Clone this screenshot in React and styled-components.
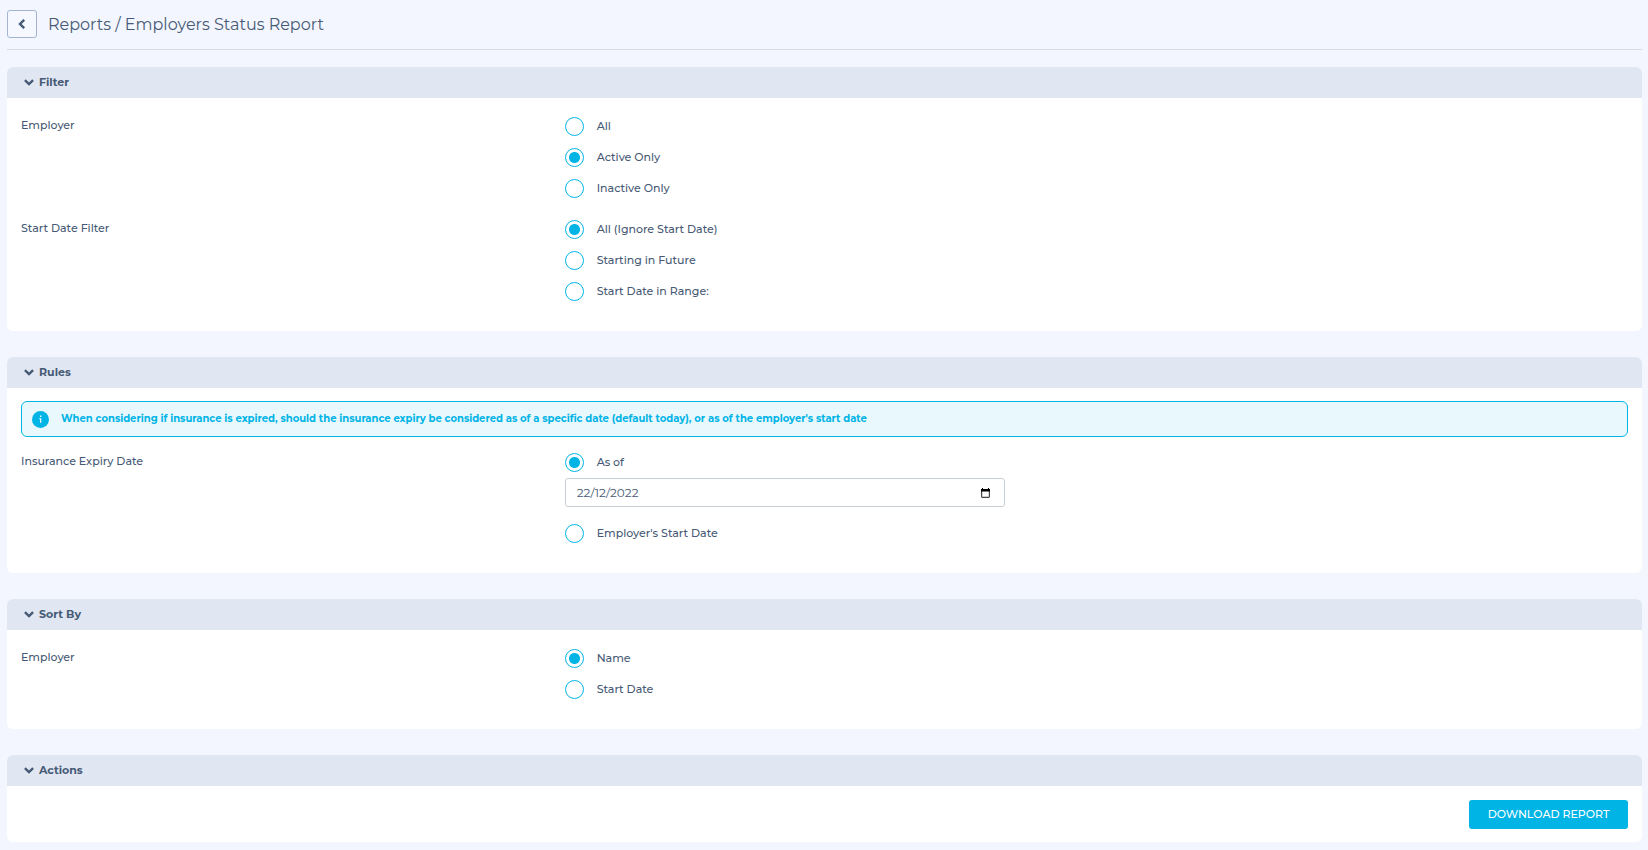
import React, { useState } from "react";
import styled, { createGlobalStyle } from "styled-components";

const ink = "#475a75";
const accent = "#00b4e6";

const GlobalStyle = createGlobalStyle`
  *, *::before, *::after { box-sizing: border-box; }
  body {
    margin: 0;
    background: #f3f6fe;
    color: ${ink};
    font-family: Montserrat, Inter, "Liberation Sans", sans-serif;
    font-size: 11px;
    font-weight: 500;
  }
  button, input { font: inherit; color: inherit; }
`;

const Page = styled.main`
  padding: 10px 6px 8px 7px;
`;

const TitleBar = styled.header`
  display: flex;
  align-items: flex-start;
  gap: 11px;
  padding-bottom: 9px;
  margin-bottom: 17px;
  border-bottom: 1px solid #d8dce3;
`;

const BackButton = styled.button`
  display: flex;
  align-items: center;
  justify-content: center;
  width: 30px;
  height: 28px;
  padding: 0;
  border: 1px solid #a5b5d0;
  border-radius: 3px;
  background: #f5f9ff;
  cursor: pointer;
`;

const Title = styled.h1`
  margin: 0;
  font-size: 16px;
  font-weight: 400;
  line-height: 30px;
`;

const PanelBox = styled.section`
  border-radius: 6px;
  background: #fff;
  overflow: hidden;

  & + & { margin-top: 26px; }
`;

const PanelHeading = styled.h2`
  margin: 0;
  background: #e0e7f3;
  font-size: 11px;
`;

const PanelToggle = styled.button`
  display: flex;
  align-items: center;
  gap: 5px;
  width: 100%;
  height: 31px;
  padding: 0 17px 1px;
  border: 0;
  background: none;
  font-weight: 700;
  text-align: left;
  cursor: pointer;
`;

const PanelBody = styled.div`
  display: flex;
  flex-direction: column;
  gap: 10px;
  padding: 13px 14px 24px;
`;

const ActionsBody = styled.div`
  display: flex;
  justify-content: flex-end;
  padding: 14px 14px 13px;
`;

const FieldRow = styled.div`
  display: grid;
  grid-template-columns: 1fr 2fr;
  column-gap: 12px;
`;

const FieldLabel = styled.div`
  line-height: 28px;
`;

const RadioLine = styled.label`
  display: flex;
  align-items: center;
  gap: 13px;
  width: fit-content;
  height: 31px;
  cursor: pointer;
`;

const LineText = styled.span`
  padding-bottom: 2px;
`;

const RadioInput = styled.input`
  appearance: none;
  flex: none;
  width: 19px;
  height: 19px;
  margin: 0;
  border: 1px solid ${accent};
  border-radius: 50%;
  background: #fff;
  cursor: pointer;

  &:checked {
    background: radial-gradient(circle, ${accent} 5px, #fff 6px);
  }
`;

const Notice = styled.div`
  display: flex;
  align-items: center;
  gap: 12px;
  min-height: 36px;
  padding: 0 10px;
  border: 1px solid ${accent};
  border-radius: 6px;
  background: #e9f8fd;
  color: ${accent};
  font-size: 10px;
  font-weight: 700;
`;

const DateBox = styled.div`
  display: flex;
  align-items: center;
  width: 100%;
  max-width: 440px;
  height: 29px;
  margin-bottom: 11px;
  padding: 0 14px 0 11px;
  border: 1px solid #c8ced6;
  border-radius: 3px;
  background: #fff;
`;

const DateInput = styled.input`
  flex: 1;
  min-width: 0;
  padding: 0;
  border: 0;
  background: none;
  font-size: 12px;
  font-weight: 400;
`;

const CalendarButton = styled.button`
  display: flex;
  padding: 0;
  border: 0;
  background: none;
  cursor: pointer;
`;

const PrimaryButton = styled.button`
  width: 159px;
  height: 29px;
  padding: 0 0 1px;
  border: 0;
  border-radius: 3px;
  background: ${accent};
  color: #fff;
  text-transform: uppercase;
  cursor: pointer;
`;

const ChevronDown = () => (
  <svg width="10" height="7" viewBox="0 0 10 7" fill="none" stroke="currentColor" strokeWidth="2.4" aria-hidden="true">
    <path d="M.9 1.1 5 5 9.1 1.1" />
  </svg>
);

const ChevronLeft = () => (
  <svg width="8" height="10" viewBox="0 0 8 10" fill="none" stroke="currentColor" strokeWidth="2.4" aria-hidden="true">
    <path d="M6.2.8 2 5l4.2 4.2" />
  </svg>
);

const InfoIcon = () => (
  <svg width="17" height="17" viewBox="0 0 17 17" aria-hidden="true">
    <circle cx="8.5" cy="8.5" r="8.5" fill="currentColor" />
    <path d="M8 4.5h1.400V6H8zM7.2 7.3h2.1v4.5H8V8.2h-.8z" fill="#e9f8fd" />
  </svg>
);

const CalendarIcon = () => (
  <svg width="9" height="10" viewBox="0 0 9 10" aria-hidden="true">
    <rect x=".6" y="1.6" width="7.8" height="7.8" rx=".8" fill="none" stroke="#444" strokeWidth="1.2" />
    <path fill="#000" d="M1 0h1v1h5V0h1v1h1v2.500H0V1h1z" />
  </svg>
);

function Panel({ title, Body = PanelBody, children }) {
  const [open, setOpen] = useState(true);
  return (
    <PanelBox>
      <PanelHeading>
        <PanelToggle type="button" aria-expanded={open} onClick={() => setOpen(!open)}>
          <ChevronDown />
          {title}
        </PanelToggle>
      </PanelHeading>
      {open && <Body>{children}</Body>}
    </PanelBox>
  );
}

function Field({ id, label, children }) {
  return (
    <FieldRow role="radiogroup" aria-labelledby={id}>
      <FieldLabel id={id}>{label}</FieldLabel>
      <div>{children}</div>
    </FieldRow>
  );
}

function Radio({ name, label, checked }) {
  return (
    <RadioLine>
      <RadioInput type="radio" name={name} value={label} defaultChecked={checked} />
      <LineText>{label}</LineText>
    </RadioLine>
  );
}

export default function App() {
  return (
    <>
      <GlobalStyle />
      <Page>
        <TitleBar>
          <BackButton type="button" aria-label="Back">
            <ChevronLeft />
          </BackButton>
          <Title>Reports / Employers Status Report</Title>
        </TitleBar>

        <Panel title="Filter">
          <Field id="filter-employer" label="Employer">
            <Radio name="employer" label="All" />
            <Radio name="employer" label="Active Only" checked />
            <Radio name="employer" label="Inactive Only" />
          </Field>
          <Field id="filter-start" label="Start Date Filter">
            <Radio name="start" label="All (Ignore Start Date)" checked />
            <Radio name="start" label="Starting in Future" />
            <Radio name="start" label="Start Date in Range:" />
          </Field>
        </Panel>

        <Panel title="Rules">
          <Notice>
            <InfoIcon />
            <LineText>
              When considering if insurance is expired, should the insurance expiry be considered as of a
              specific date (default today), or as of the employer's start date
            </LineText>
          </Notice>
          <Field id="rules-expiry" label="Insurance Expiry Date">
            <Radio name="expiry" label="As of" checked />
            <DateBox>
              <DateInput type="text" inputMode="numeric" aria-label="As of date" defaultValue="22/12/2022" />
              <CalendarButton type="button" aria-label="Choose date">
                <CalendarIcon />
              </CalendarButton>
            </DateBox>
            <Radio name="expiry" label="Employer's Start Date" />
          </Field>
        </Panel>

        <Panel title="Sort By">
          <Field id="sort-employer" label="Employer">
            <Radio name="sort" label="Name" checked />
            <Radio name="sort" label="Start Date" />
          </Field>
        </Panel>

        <Panel title="Actions" Body={ActionsBody}>
          <PrimaryButton type="button">Download Report</PrimaryButton>
        </Panel>
      </Page>
    </>
  );
}
